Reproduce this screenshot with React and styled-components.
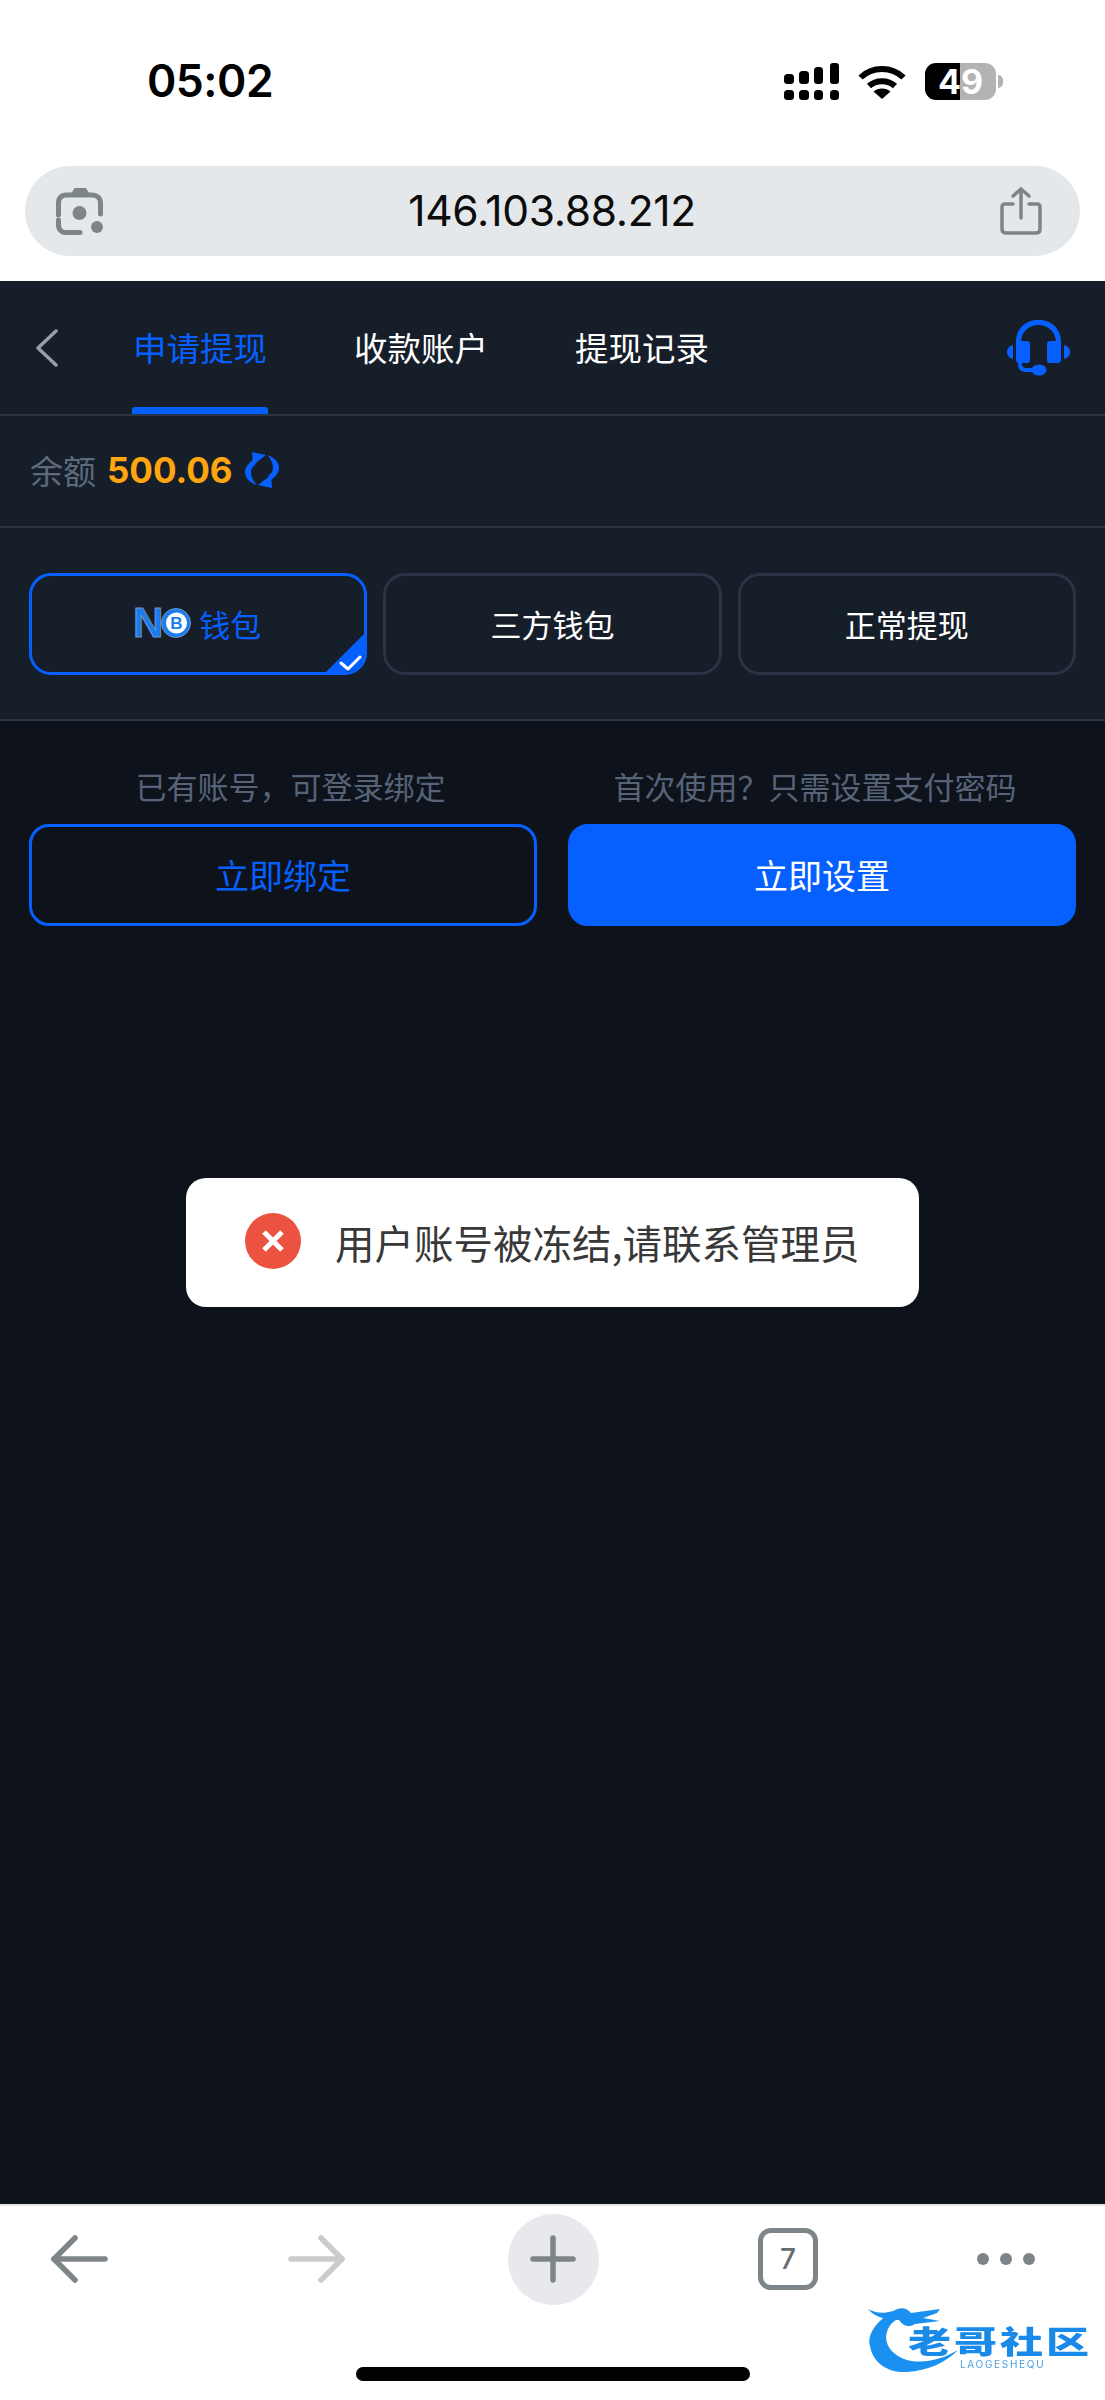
import React from "react";
import styled, { createGlobalStyle } from "styled-components";

const CJK = `"Noto Sans CJK SC", "Noto Sans", sans-serif`;
const LATIN = `Inter, "Liberation Sans", sans-serif`;
const BLUE = "#0560ff";

const Global = createGlobalStyle`
  html, body { margin: 0; padding: 0; background: #fff; }
  * { box-sizing: border-box; }
`;

const Page = styled.div`
  position: relative;
  width: 1105px;
  height: 2400px;
  display: flex;
  flex-direction: column;
  overflow: hidden;
  background: #0e131b;
  font-family: ${CJK};
`;

const Chrome = styled.header`
  height: 281px;
  padding: 56px 25px 25px;
  background: #fff;
  display: flex;
  flex-direction: column;
  gap: 60px;
`;
const StatusRow = styled.div`
  height: 50px;
  padding: 0 84px 0 122px;
  display: flex;
  align-items: center;
  justify-content: space-between;
`;
const Time = styled.span`
  font: 600 44.5px/50px ${LATIN};
  letter-spacing: -0.5px;
  color: #000;
`;
const StatusIcons = styled.div`
  display: flex;
  align-items: center;
  gap: 19px;
`;
const Battery = styled.div`
  position: relative;
  width: 71px;
  height: 37px;
  border-radius: 11px;
  background: linear-gradient(90deg, #000 0 35px, #b3b3b3 35px 71px);
  color: #fff;
  font: 700 34px/37px ${LATIN};
  text-align: center;
  &::after {
    content: "";
    position: absolute;
    left: 73px;
    top: 12px;
    width: 5px;
    height: 13px;
    border-radius: 0 6px 6px 0;
    background: #b3b3b3;
  }
`;
const UrlBar = styled.div`
  height: 90px;
  padding: 0 38px 0 31px;
  border-radius: 45px;
  background: #e5e8eb;
  display: flex;
  align-items: center;
  justify-content: space-between;
`;
const UrlText = styled.span`
  font: 400 42.5px/48px ${LATIN};
  letter-spacing: -0.3px;
  color: #0c0c0c;
`;

const Nav = styled.nav`
  height: 135px;
  background: #161e2a;
  border-bottom: 2px solid #2a3444;
  display: flex;
  align-items: center;
  padding: 0 35px 0 35px;
`;
const Tabs = styled.div`
  margin-left: 73px;
  display: flex;
  gap: 85px;
  flex: 1;
`;
const Tab = styled.div`
  position: relative;
  height: 133px;
  width: 136px;
  padding-bottom: 2px;
  display: flex;
  align-items: center;
  justify-content: center;
  white-space: nowrap;
  font-size: 33.5px;
  font-weight: 400;
  color: ${(p) => (p.$active ? BLUE : "#fff")};
  ${(p) =>
    p.$active &&
    `&::after { content: ""; position: absolute; left: 0; right: 0; bottom: 0; height: 7px; border-radius: 3px 3px 0 0; background: ${BLUE}; }`}
`;

const BalanceRow = styled.section`
  height: 112px;
  padding: 0 30px 2px;
  background: #161e2a;
  border-bottom: 2px solid #2a3444;
  display: flex;
  align-items: center;
`;
const BalanceLabel = styled.span`
  font-size: 33px;
  color: #5d6a7e;
`;
const BalanceValue = styled.span`
  margin-left: 11px;
  font: 700 35px/44px ${LATIN};
  color: #ffa50f;
`;
const RefreshWrap = styled.span`
  margin-left: 12px;
  display: flex;
`;

const Options = styled.section`
  height: 193px;
  padding: 45px 29px 0;
  background: #161e2a;
  border-bottom: 2px solid #2a3444;
  display: grid;
  grid-template-columns: repeat(3, 1fr);
  column-gap: 16px;
  align-items: start;
`;
const Card = styled.div`
  position: relative;
  height: 102px;
  padding: 0 ${(p) => (p.$active ? "2px" : "0")} 2px 0;
  overflow: hidden;
  border-radius: 22px;
  border: 3px solid ${(p) => (p.$active ? BLUE : "#2a3444")};
  display: flex;
  align-items: center;
  justify-content: center;
  gap: 8px;
  font-size: 31px;
  color: ${(p) => (p.$active ? BLUE : "#fff")};
`;
const Corner = styled.span`
  position: absolute;
  right: -3px;
  bottom: -3px;
  width: 44px;
  height: 44px;
  display: flex;
`;
const NoLogo = styled.span`
  display: flex;
  align-items: center;
`;
const NoLetter = styled.span`
  font: 900 42px/40px "Liberation Sans", sans-serif;
  color: #1b7cf2;
  -webkit-text-stroke: 1px #6f93bd;
  margin-right: -2px;
`;

const Bind = styled.section`
  padding: 45px 29px 0;
  display: grid;
  grid-template-columns: 1fr 1fr;
  column-gap: 31px;
  row-gap: 18px;
`;
const Hint = styled.p`
  margin: 0;
  padding: ${(p) => (p.$side === "left" ? "0 0 0 15px" : "0 14px 0 0")};
  text-align: center;
  font-size: 31px;
  line-height: 40px;
  color: #566378;
`;
const Button = styled.button`
  height: 102px;
  padding: 0 0 2px;
  border-radius: 20px;
  font-family: ${CJK};
  font-size: 34px;
  border: 3px solid ${BLUE};
  background: ${(p) => (p.$solid ? BLUE : "transparent")};
  color: ${(p) => (p.$solid ? "#fff" : BLUE)};
`;

const Spacer = styled.div`
  flex: 1;
`;

const Toast = styled.div`
  position: absolute;
  left: 186px;
  top: 1178px;
  width: 733px;
  height: 129px;
  padding: 0 0 3px 59px;
  border-radius: 20px;
  background: #fff;
  display: flex;
  align-items: center;
  gap: 34px;
`;
const ToastText = styled.span`
  font-size: 39.5px;
  color: #383838;
  white-space: nowrap;
`;

const Toolbar = styled.footer`
  height: 196px;
  background: #fff;
  border-top: 2px solid #e2e3e5;
  display: flex;
  flex-direction: column;
`;
const ToolRow = styled.div`
  height: 106px;
  display: grid;
  grid-template-columns: 160px 312px 162px 308px 128px;
  align-items: center;
  justify-items: center;
`;
const PlusCircle = styled.div`
  width: 91px;
  height: 91px;
  border-radius: 50%;
  background: #e8e9ed;
  display: flex;
  align-items: center;
  justify-content: center;
`;
const TabCount = styled.div`
  width: 60px;
  height: 62px;
  border: 5px solid #7d8588;
  border-radius: 13px;
  display: flex;
  align-items: center;
  justify-content: center;
  font: 500 28px/30px ${LATIN};
  color: #666d70;
`;
const Dots = styled.div`
  display: flex;
  gap: 11px;
`;
const Dot = styled.span`
  width: 12px;
  height: 12px;
  border-radius: 50%;
  background: #7d8588;
`;
const HomeBar = styled.div`
  align-self: center;
  margin-top: 55px;
  width: 394px;
  height: 14px;
  border-radius: 7px;
  background: #000;
`;

const Watermark = styled.div`
  position: absolute;
  left: 865px;
  top: 2300px;
  width: 235px;
  height: 80px;
  filter: blur(0.7px);
`;
const WatermarkTitle = styled.span`
  position: absolute;
  left: 43px;
  top: 24px;
  font-size: 43px;
  line-height: 43px;
  font-weight: 900;
  letter-spacing: 3px;
  white-space: nowrap;
  color: #1a8ae8;
  transform: scaleY(0.72);
  transform-origin: top left;
`;
const WatermarkSub = styled.span`
  position: absolute;
  left: 95px;
  top: 58px;
  font: 400 10px/12px ${LATIN};
  letter-spacing: 1.7px;
  color: #4a9fe0;
`;

const Signal = () => (
  <svg width="55" height="37" viewBox="0 0 55 37" fill="#000">
    <rect x="0" y="11" width="10" height="10" rx="3.5" />
    <rect x="15" y="8" width="10" height="13" rx="3.5" />
    <rect x="30" y="4" width="9" height="17" rx="3.5" />
    <rect x="46" y="0" width="9" height="21" rx="3" />
    <rect x="0" y="27" width="10" height="10" rx="3.5" />
    <rect x="15" y="27" width="10" height="10" rx="3.5" />
    <rect x="30" y="27" width="9" height="10" rx="3.5" />
    <rect x="46" y="27" width="9" height="10" rx="3.5" />
  </svg>
);
const Wifi = () => (
  <svg width="48" height="35" viewBox="0 0 48 35" fill="none" stroke="#000" strokeWidth="6">
    <path d="M2.5 13.5C14 2 34 2 45.5 13.5" />
    <path d="M11 22C18 15.5 30 15.5 37 22" />
    <path d="M24 35L15.5 27.5C20 23.5 28 23.5 32.5 27.5Z" fill="#000" stroke="none" />
  </svg>
);
const Lens = () => (
  <svg width="48" height="48" viewBox="0 0 48 48" fill="none" stroke="#7d8588" strokeWidth="5" strokeLinecap="round">
    <path d="M2.5 28V16C2.5 11 5.5 8 10.5 8H36C41 8 44.5 11 44.5 16V27" />
    <path d="M2.5 33V38C2.5 43 6 45.5 10 45.5H24" />
    <path d="M15 7L18.500 1H30L33.500 7Z" fill="#7d8588" stroke="none" />
    <circle cx="23.500" cy="26" r="7" fill="#7d8588" stroke="none" />
    <circle cx="41" cy="40" r="6" fill="#7d8588" stroke="none" />
  </svg>
);
const Share = () => (
  <svg width="42" height="48" viewBox="0 0 42 48" fill="none" stroke="#7d8588" strokeWidth="3.500" strokeLinecap="round" strokeLinejoin="round">
    <path d="M13 17H5C3 17 2 18 2 20V42C2 45 3.500 46 6 46H36C38.500 46 40 45 40 42V20C40 18 39 17 37 17H29" />
    <path d="M21 31V2" />
    <path d="M13 9L21 2L29 9" />
  </svg>
);
const Back = () => (
  <svg width="24" height="38" viewBox="0 0 24 38" fill="none" stroke="#97a0aa" strokeWidth="3.500" strokeLinecap="round" strokeLinejoin="round">
    <path d="M21 2L3 19L21 36" />
  </svg>
);
const Headset = () => (
  <svg width="63" height="56" viewBox="0 0 63 56" fill={BLUE}>
    <path d="M9 22C9 8 19 0 31.500 0S54 8 54 22V24H49V22C49 12 41 5 31.500 5S14 12 14 22V24H9Z" />
    <rect x="9" y="21" width="14" height="22" rx="3" />
    <rect x="40" y="21" width="14" height="22" rx="3" />
    <path d="M6 25V39C2 38 0 35 0 32S2 26 6 25Z" />
    <path d="M57 25V39C61 38 63 35 63 32S61 26 57 25Z" />
    <path d="M13 42V44C13 48 15 50 19 50H26" fill="none" stroke={BLUE} strokeWidth="4" />
    <ellipse cx="32" cy="50" rx="7.500" ry="5.500" />
  </svg>
);
const RefreshHalf = () => (
  <>
    <path d="M7 0L21 3L8 13Z" />
    <path d="M8 8C2 12 0 17 0 20C0 26 5 31 12 33C8 29 6 25 6 20C6 17 8 14 11 12Z" />
  </>
);
const Refresh = () => (
  <svg width="34" height="36" viewBox="0 0 34 36" fill={BLUE}>
    <RefreshHalf />
    <g transform="rotate(180 17 18)">
      <RefreshHalf />
    </g>
  </svg>
);
const CornerMark = () => (
  <svg width="44" height="44" viewBox="0 0 44 44">
    <path d="M44 0V44H0Z" fill={BLUE} />
    <path d="M18 32L25 38L37 26" fill="none" stroke="#fff" strokeWidth="3" strokeLinecap="round" strokeLinejoin="round" />
  </svg>
);
const Coin = () => (
  <svg width="30" height="30" viewBox="0 0 30 30">
    <circle cx="15" cy="15" r="14.500" fill="#1b7cf2" stroke="#6f93bd" />
    <circle cx="15.500" cy="15" r="10.500" fill="#fff" />
    <text x="15.500" y="21" textAnchor="middle" fontSize="17" fontWeight="700" fontFamily="Liberation Sans, sans-serif" fill="#1b7cf2">B</text>
  </svg>
);
const ErrorIcon = () => (
  <svg width="56" height="56" viewBox="0 0 56 56">
    <circle cx="28" cy="28" r="28" fill="#ec5240" />
    <path d="M19 19L37 37M37 19L19 37" stroke="#fff" strokeWidth="5" />
  </svg>
);
const ArrowLeft = ({ color = "#7d8588" }) => (
  <svg width="58" height="48" viewBox="0 0 58 48" fill="none" stroke={color} strokeWidth="5.500" strokeLinecap="round" strokeLinejoin="round">
    <path d="M24 3L3 24L24 45" />
    <path d="M3 24H54" />
  </svg>
);
const ArrowRight = ({ color = "#cbcbcb" }) => (
  <svg width="58" height="48" viewBox="0 0 58 48" fill="none" stroke={color} strokeWidth="5.500" strokeLinecap="round" strokeLinejoin="round">
    <path d="M34 3L55 24L34 45" />
    <path d="M55 24H4" />
  </svg>
);
const Plus = () => (
  <svg width="46" height="48" viewBox="0 0 46 48" stroke="#7d8588" strokeWidth="5.500" strokeLinecap="round">
    <path d="M23 3V45" />
    <path d="M3 24H43" />
  </svg>
);
const Dragon = () => (
  <svg width="100" height="80" viewBox="0 0 100 80" fill="#1a90f0">
    <path d="M28 12C8 22 2 38 5 46C8 64 24 73 42 72C62 71 82 62 93 50C76 60 58 64 42 60C28 56 18 44 22 32C24 24 30 20 38 16Z" />
    <path d="M3 9C10 13 18 14 28 11C34 8 40 6 46 13L75 9L72 13L58 18L75 21L50 24C44 28 38 26 34 20C24 20 10 18 3 9Z" />
  </svg>
);

export default function App() {
  return (
    <>
      <Global />
      <Page>
        <Chrome>
          <StatusRow>
            <Time>05:02</Time>
            <StatusIcons>
              <Signal />
              <Wifi />
              <Battery>49</Battery>
            </StatusIcons>
          </StatusRow>
          <UrlBar>
            <Lens />
            <UrlText>146.103.88.212</UrlText>
            <Share />
          </UrlBar>
        </Chrome>

        <Nav>
          <Back />
          <Tabs>
            <Tab $active>申请提现</Tab>
            <Tab>收款账户</Tab>
            <Tab>提现记录</Tab>
          </Tabs>
          <Headset />
        </Nav>

        <BalanceRow>
          <BalanceLabel>余额</BalanceLabel>
          <BalanceValue>500.06</BalanceValue>
          <RefreshWrap>
            <Refresh />
          </RefreshWrap>
        </BalanceRow>

        <Options>
          <Card $active>
            <NoLogo>
              <NoLetter>N</NoLetter>
              <Coin />
            </NoLogo>
            钱包
            <Corner>
              <CornerMark />
            </Corner>
          </Card>
          <Card>三方钱包</Card>
          <Card>正常提现</Card>
        </Options>

        <Bind>
          <Hint $side="left">{"已有账号\uFF0C可登录绑定"}</Hint>
          <Hint $side="right">{"首次使用\uFF1F只需设置支付密码"}</Hint>
          <Button>立即绑定</Button>
          <Button $solid>立即设置</Button>
        </Bind>

        <Spacer />

        <Toolbar>
          <ToolRow>
            <ArrowLeft />
            <ArrowRight />
            <PlusCircle>
              <Plus />
            </PlusCircle>
            <TabCount>7</TabCount>
            <Dots>
              <Dot />
              <Dot />
              <Dot />
            </Dots>
          </ToolRow>
          <HomeBar />
        </Toolbar>

        <Toast>
          <ErrorIcon />
          <ToastText>用户账号被冻结,请联系管理员</ToastText>
        </Toast>

        <Watermark>
          <Dragon />
          <WatermarkTitle>老哥社区</WatermarkTitle>
          <WatermarkSub>LAOGESHEQU</WatermarkSub>
        </Watermark>
      </Page>
    </>
  );
}
